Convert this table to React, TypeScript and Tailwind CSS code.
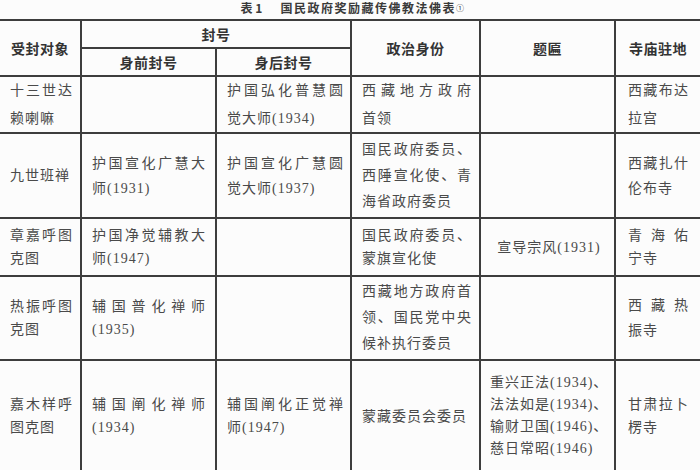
import React from "react";

type CellProps = {
  lines: string[];
  cls?: string;
  lead?: string;
  last?: boolean;
  center?: boolean;
};

const body = "font-['Liberation_Serif','Noto_Sans_CJK_SC',serif] text-[14px] tracking-[1px] text-[#4a4a4a]";

function Cell({ lines, cls = "", lead = "leading-[25px]", last = false, center = false }: CellProps) {
  return (
    <div
      className={`flex flex-col justify-center border-b-2 border-[#3d3d3d] ${last ? "" : "border-r-2"} ${body} ${lead} ${cls}`}
    >
      {lines.map((l, i) => (
        <div
          key={i}
          className={
            center
              ? "text-center whitespace-nowrap"
              : i < lines.length - 1
              ? "text-justify [text-align-last:justify] whitespace-nowrap"
              : "text-left whitespace-nowrap"
          }
        >
          {l}
        </div>
      ))}
    </div>
  );
}

function Head({ text, cls = "", last = false }: { text: string; cls?: string; last?: boolean }) {
  return (
    <div
      className={`flex items-center justify-center border-b-2 border-[#3d3d3d] ${last ? "" : "border-r-2"} font-['Noto_Sans_CJK_SC',sans-serif] font-bold text-[14px] tracking-[0.5px] text-[#333] ${cls}`}
    >
      {text}
    </div>
  );
}

const c1 = "pl-[10px] pr-[7px]";
const c2 = "pl-[10px] pr-[9px]";
const c3 = "pl-[10px] pr-[6px]";
const c4 = "pl-[10px] pr-[7px]";
const c5 = "pl-[9px] pr-[6px]";
const c6 = "pl-[12px] pr-[11px]";

export default function App() {
  return (
    <div className="w-[700px] h-[470px] overflow-hidden bg-[#fcfcfc]">
      <div className="h-[19px] flex items-start justify-center gap-[18px] pl-[6px] pt-[1px] font-['Noto_Sans_CJK_SC',sans-serif] font-bold text-[12px] leading-[13px] text-[#3a3a3a]">
        <span>表 1</span>
        <span className="tracking-[1.5px]">
          国民政府奖励藏传佛教法佛表<span className="text-[8px] font-normal align-top">①</span>
        </span>
      </div>
      <div className="grid grid-cols-[82px_135px_135px_129px_135px_84px] grid-rows-[28px_28px_57px_85px_58px_84px_112px] border-t-2 border-[#3d3d3d]">
        <Head text="受封对象" cls="row-span-2" />
        <Head text="封号" cls="col-span-2" />
        <Head text="政治身份" cls="row-span-2" />
        <Head text="题匾" cls="row-span-2" />
        <Head text="寺庙驻地" cls="row-span-2" last />
        <Head text="身前封号" />
        <Head text="身后封号" />

        <Cell lines={["十三世达", "赖喇嘛"]} cls={c1} lead="leading-[28px]" />
        <Cell lines={[""]} cls={c2} />
        <Cell lines={["护国弘化普慧圆", "觉大师(1934)"]} cls={c3} lead="leading-[28px]" />
        <Cell lines={["西藏地方政府", "首领"]} cls={c4} lead="leading-[28px]" />
        <Cell lines={[""]} cls={c5} />
        <Cell lines={["西藏布达", "拉宫"]} cls={c6} lead="leading-[28px]" last />

        <Cell lines={["九世班禅"]} cls={c1} />
        <Cell lines={["护国宣化广慧大", "师(1931)"]} cls={c2} />
        <Cell lines={["护国宣化广慧圆", "觉大师(1937)"]} cls={c3} />
        <Cell lines={["国民政府委员、", "西陲宣化使、青", "海省政府委员"]} cls={c4} lead="leading-[26px]" />
        <Cell lines={[""]} cls={c5} />
        <Cell lines={["西藏扎什", "伦布寺"]} cls={c6} last />

        <Cell lines={["章嘉呼图", "克图"]} cls={c1} lead="leading-[23px]" />
        <Cell lines={["护国净觉辅教大", "师(1947)"]} cls={c2} lead="leading-[23px]" />
        <Cell lines={[""]} cls={c3} />
        <Cell lines={["国民政府委员、", "蒙旗宣化使"]} cls={c4} lead="leading-[23px]" />
        <Cell lines={["宣导宗风(1931)"]} cls={c5} center />
        <Cell lines={["青海佑", "宁寺"]} cls={c6} lead="leading-[23px]" last />

        <Cell lines={["热振呼图", "克图"]} cls={c1} lead="leading-[23px]" />
        <Cell lines={["辅国普化禅师", "(1935)"]} cls={c2} lead="leading-[23px]" />
        <Cell lines={[""]} cls={c3} />
        <Cell lines={["西藏地方政府首", "领、国民党中央", "候补执行委员"]} cls={c4} lead="leading-[26px]" />
        <Cell lines={[""]} cls={c5} />
        <Cell lines={["西藏热", "振寺"]} cls={c6} lead="leading-[25px]" last />

        <Cell lines={["嘉木样呼", "图克图"]} cls={c1} lead="leading-[23px]" />
        <Cell lines={["辅国阐化禅师", "(1934)"]} cls={c2} lead="leading-[23px]" />
        <Cell lines={["辅国阐化正觉禅", "师(1947)"]} cls={c3} lead="leading-[23px]" />
        <Cell lines={["蒙藏委员会委员"]} cls={c4} />
        <Cell lines={["重兴正法(1934)、", "法法如是(1934)、", "输财卫国(1946)、", "慈日常昭(1946)"]} cls={c5} lead="leading-[22px]" />
        <Cell lines={["甘肃拉卜", "楞寺"]} cls={c6} lead="leading-[23px]" last />
      </div>
    </div>
  );
}
